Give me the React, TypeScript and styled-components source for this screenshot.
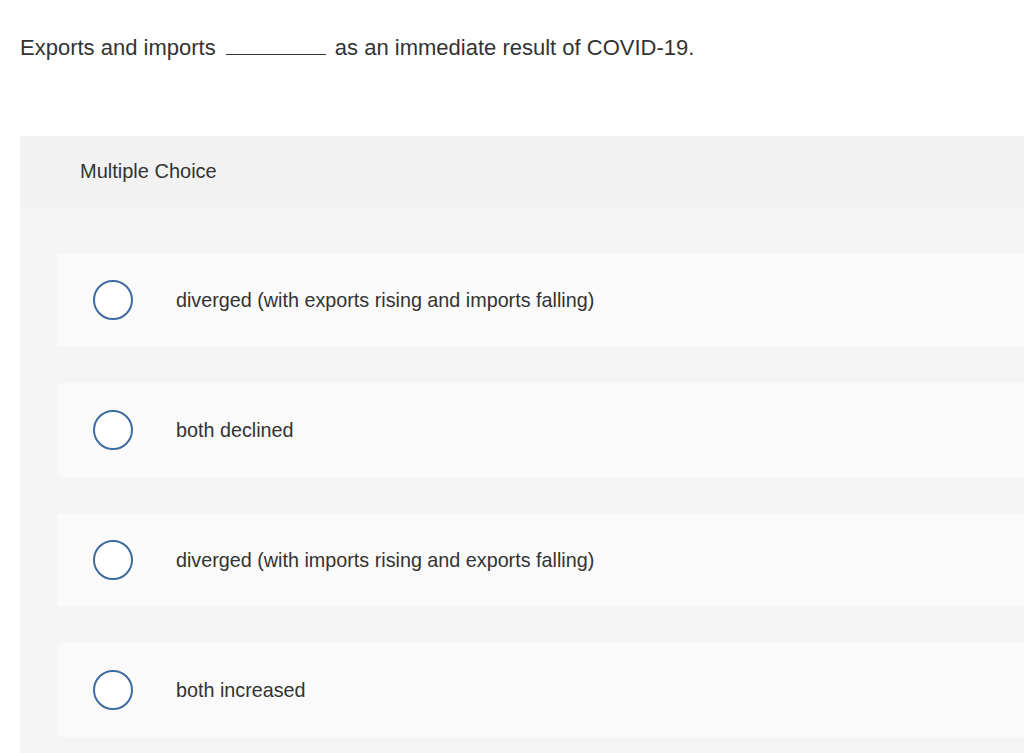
import React from "react"
import styled, { createGlobalStyle } from "styled-components"

const GlobalStyle = createGlobalStyle`
  html, body {
    margin: 0;
    padding: 0;
    background: #ffffff;
  }
  body {
    font-family: "Liberation Sans", Arial, sans-serif;
    color: #333333;
    overflow: hidden;
  }
`

const choices = [
  "diverged (with exports rising and imports falling)",
  "both declined",
  "diverged (with imports rising and exports falling)",
  "both increased",
]

const App = () => {
  return (
    <Page>
      <GlobalStyle />
      <Prompt>
        Exports and imports <Blank /> as an immediate result of COVID-19.
      </Prompt>
      <Panel>
        <PanelHeader>Multiple Choice</PanelHeader>
        <ChoiceList>
          {choices.map((text) => (
            <Choice key={text}>
              <Radio />
              <ChoiceText>{text}</ChoiceText>
            </Choice>
          ))}
        </ChoiceList>
      </Panel>
    </Page>
  )
}

const Page = styled.div`
  width: 1024px;
  height: 753px;
  overflow: hidden;
  padding: 34px 0 0 20px;
  box-sizing: border-box;
`

const Prompt = styled.p`
  margin: 0;
  font-size: 22px;
  line-height: 26px;
  color: #333333;
  white-space: nowrap;
`

const Blank = styled.span`
  display: inline-block;
  width: 100px;
  height: 20px;
  margin: 0 3px 0 4px;
  border-bottom: 1px solid #333333;
  vertical-align: baseline;
`

const Panel = styled.section`
  margin-top: 75px;
  width: 1100px;
  background: #f5f5f5;
  padding-bottom: 40px;
`

const PanelHeader = styled.div`
  height: 71px;
  display: flex;
  align-items: center;
  padding-left: 60px;
  background: #f2f2f2;
  font-size: 20px;
  color: #333333;
`

const ChoiceList = styled.div`
  display: flex;
  flex-direction: column;
  gap: 36px;
  padding: 46px 0 0 37px;
`

const Choice = styled.label`
  display: flex;
  align-items: center;
  height: 94px;
  padding-left: 36px;
  background: #fafafa;
  border-radius: 4px;
`

const Radio = styled.span`
  flex: none;
  width: 40px;
  height: 40px;
  box-sizing: border-box;
  border: 2px solid #3f6b9f;
  border-radius: 50%;
  background: #ffffff;
`

const ChoiceText = styled.span`
  margin-left: 43px;
  font-size: 19.75px;
  color: #333333;
`

export default App
